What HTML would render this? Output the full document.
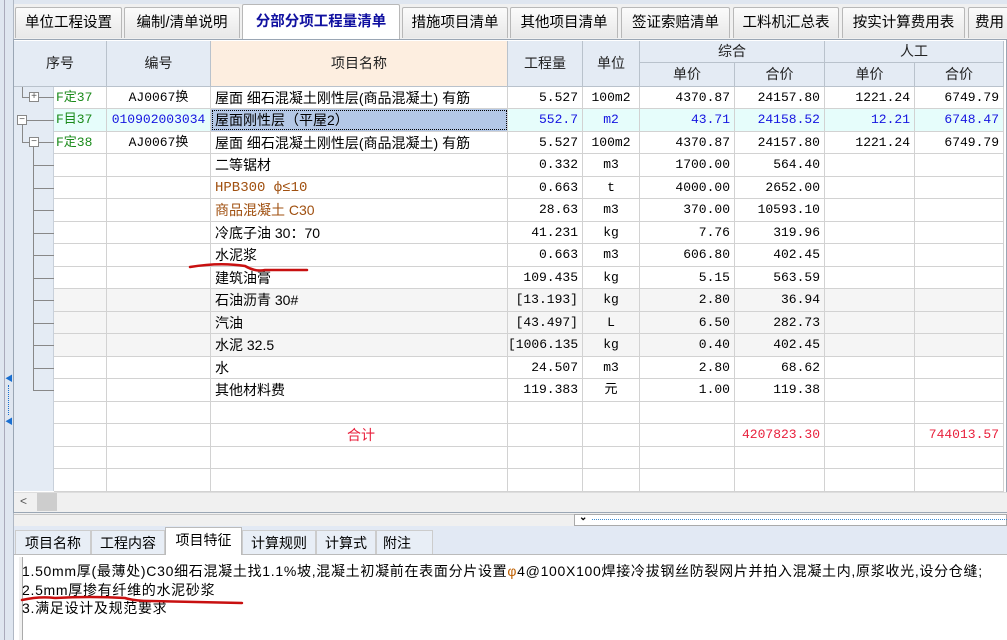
<!DOCTYPE html>
<html><head><meta charset="utf-8"><style>
*{margin:0;padding:0;box-sizing:border-box}
body{width:1007px;height:640px;overflow:hidden;background:#f0f0f0;font-family:"Liberation Sans","Noto Sans CJK SC","WenQuanYi Zen Hei",sans-serif;font-size:13px;color:#000;position:relative}
.abs{position:absolute}
.tab{position:absolute;top:7px;height:31px;border:1px solid #b8b8b8;border-bottom:none;background:linear-gradient(#fbfbfb,#e8e8e8);font-size:14.5px;line-height:30px;text-align:center;border-radius:2px 2px 0 0}
.tab.act{top:4px;height:35px;background:#fff;color:#1010a0;font-weight:bold;line-height:34px;z-index:2}
.hd{position:absolute;background:#e4ebf4;border-right:1px solid #b9c2cc;border-bottom:1px solid #b9c2cc;text-align:center;font-size:14px;color:#222}
.row{position:absolute;left:54px;width:950px;border-bottom:1px solid #d2d2d2;background:#fff}
.c{position:absolute;top:0;height:100%;line-height:22px;border-right:1px solid #d2d2d2;white-space:nowrap;overflow:hidden;font-family:"Liberation Mono","Noto Sans CJK SC",monospace;font-size:13px}
.s{left:0;width:53px;padding-left:2px;color:#1a8a1a}
.b{left:53px;width:104px;text-align:center}
.n{left:157px;width:297px;padding-left:4px;font-family:"Liberation Sans","Noto Sans CJK SC",sans-serif;font-size:14px}
.q{left:454px;width:75px;text-align:right;padding-right:4px}
.u{left:529px;width:57px;text-align:center}
.p1{left:586px;width:95px;text-align:right;padding-right:4px}
.p2{left:681px;width:90px;text-align:right;padding-right:4px}
.p3{left:771px;width:90px;text-align:right;padding-right:4px}
.p4{left:861px;width:89px;text-align:right;padding-right:4px}
.g{background:#f5f5f5}
.btab{position:absolute;top:530px;height:24px;border:1px solid #ccc;border-bottom:none;background:#e8eef6;font-size:14px;line-height:24px;text-align:center}
.tl{position:absolute;background:#888}
</style></head><body>
<div class="abs" style="left:0;top:0;width:14px;height:640px;background:#dfe6f0;border-right:1px solid #b0b8c4"></div>
<div class="abs" style="left:4px;top:0;width:1px;height:640px;background:#aab"></div>
<div class="abs" style="left:5px;top:373px;color:#1a6fd0;font-size:8px">◀</div>
<div class="abs" style="left:8px;top:385px;width:1px;height:30px;border-left:1px dotted #1a6fd0"></div>
<div class="abs" style="left:5px;top:416px;color:#1a6fd0;font-size:8px">◀</div>
<div class="abs" style="left:14px;top:0;width:993px;height:4px;background:#dfe6f0"></div>
<div class="tab" style="left:15px;width:107px">单位工程设置</div>
<div class="tab" style="left:124px;width:116px">编制/清单说明</div>
<div class="tab act" style="left:242px;width:158px">分部分项工程量清单</div>
<div class="tab" style="left:402px;width:106px">措施项目清单</div>
<div class="tab" style="left:510px;width:108px">其他项目清单</div>
<div class="tab" style="left:621px;width:109px">签证索赔清单</div>
<div class="tab" style="left:733px;width:106px">工料机汇总表</div>
<div class="tab" style="left:842px;width:123px">按实计算费用表</div>
<div class="tab" style="left:968px;width:45px;text-align:left;padding-left:6px">费用汇</div>
<div class="abs" style="left:13px;top:39px;width:994px;height:474px;background:#fff;border:1px solid #9aa6b4"></div>
<div class="hd" style="left:14px;top:41px;width:93px;height:46px;line-height:44px">序号</div>
<div class="hd" style="left:107px;top:41px;width:104px;height:46px;line-height:44px">编号</div>
<div class="hd" style="left:211px;top:41px;width:297px;height:46px;line-height:44px;background:#fdeee0">项目名称</div>
<div class="hd" style="left:508px;top:41px;width:75px;height:46px;line-height:44px">工程量</div>
<div class="hd" style="left:583px;top:41px;width:57px;height:46px;line-height:44px">单位</div>
<div class="hd" style="left:640px;top:41px;width:185px;height:22px;line-height:21px">综合</div>
<div class="hd" style="left:825px;top:41px;width:179px;height:22px;line-height:21px">人工</div>
<div class="hd" style="left:640px;top:63px;width:95px;height:24px;line-height:22px">单价</div>
<div class="hd" style="left:735px;top:63px;width:90px;height:24px;line-height:22px">合价</div>
<div class="hd" style="left:825px;top:63px;width:90px;height:24px;line-height:22px">单价</div>
<div class="hd" style="left:915px;top:63px;width:89px;height:24px;line-height:22px">合价</div>
<div class="abs" style="left:14px;top:87px;width:40px;height:404px;background:#e4ebf4;border-right:1px solid #c8d0da"></div>
<div class="tl" style="left:22px;top:87px;width:1px;height:10px"></div>
<div class="tl" style="left:22px;top:97px;width:8px;height:1px"></div>
<div class="abs" style="left:29px;top:92px;width:10px;height:10px;border:1px solid #888;background:#fff;font-size:10px;line-height:7px;text-align:center;color:#555">+</div>
<div class="tl" style="left:39px;top:97px;width:15px;height:1px"></div>
<div class="abs" style="left:17px;top:115px;width:10px;height:10px;border:1px solid #888;background:#fff;font-size:10px;line-height:7px;text-align:center;color:#555">−</div>
<div class="tl" style="left:27px;top:120px;width:27px;height:1px"></div>
<div class="tl" style="left:22px;top:125px;width:1px;height:18px"></div>
<div class="tl" style="left:22px;top:142px;width:7px;height:1px"></div>
<div class="abs" style="left:29px;top:137px;width:10px;height:10px;border:1px solid #888;background:#fff;font-size:10px;line-height:7px;text-align:center;color:#555">−</div>
<div class="tl" style="left:39px;top:142px;width:15px;height:1px"></div>
<div class="tl" style="left:33px;top:147px;width:1px;height:243px"></div>
<div class="tl" style="left:33px;top:165px;width:21px;height:1px"></div>
<div class="tl" style="left:33px;top:188px;width:21px;height:1px"></div>
<div class="tl" style="left:33px;top:210px;width:21px;height:1px"></div>
<div class="tl" style="left:33px;top:233px;width:21px;height:1px"></div>
<div class="tl" style="left:33px;top:255px;width:21px;height:1px"></div>
<div class="tl" style="left:33px;top:278px;width:21px;height:1px"></div>
<div class="tl" style="left:33px;top:300px;width:21px;height:1px"></div>
<div class="tl" style="left:33px;top:323px;width:21px;height:1px"></div>
<div class="tl" style="left:33px;top:345px;width:21px;height:1px"></div>
<div class="tl" style="left:33px;top:368px;width:21px;height:1px"></div>
<div class="tl" style="left:33px;top:390px;width:21px;height:1px"></div>

<div class="row" style="top:87px;height:22px"><div class="c s">F定37</div><div class="c b">AJ0067换</div><div class="c n">屋面 细石混凝土刚性层(商品混凝土) 有筋</div><div class="c q">5.527</div><div class="c u">100m2</div><div class="c p1">4370.87</div><div class="c p2">24157.80</div><div class="c p3">1221.24</div><div class="c p4">6749.79</div></div>
<div class="row" style="top:109px;height:23px;background:#e6fdfb"><div class="c s">F目37</div><div class="c b" style="color:#1515e0">010902003034</div><div class="c n" style="background:#b4c8e6;outline:1px dotted #000;outline-offset:-2px">屋面刚性层（平屋2）</div><div class="c q" style="color:#1515e0">552.7</div><div class="c u" style="color:#1515e0">m2</div><div class="c p1" style="color:#1515e0">43.71</div><div class="c p2" style="color:#1515e0">24158.52</div><div class="c p3" style="color:#1515e0">12.21</div><div class="c p4" style="color:#1515e0">6748.47</div></div>
<div class="row" style="top:132px;height:22px"><div class="c s">F定38</div><div class="c b">AJ0067换</div><div class="c n">屋面 细石混凝土刚性层(商品混凝土) 有筋</div><div class="c q">5.527</div><div class="c u">100m2</div><div class="c p1">4370.87</div><div class="c p2">24157.80</div><div class="c p3">1221.24</div><div class="c p4">6749.79</div></div>
<div class="row" style="top:154px;height:23px"><div class="c s"></div><div class="c b"></div><div class="c n">二等锯材</div><div class="c q">0.332</div><div class="c u">m3</div><div class="c p1">1700.00</div><div class="c p2">564.40</div><div class="c p3"></div><div class="c p4"></div></div>
<div class="row" style="top:177px;height:22px"><div class="c s"></div><div class="c b"></div><div class="c n" style="color:#a05010;font-family:'Liberation Mono','Noto Sans CJK SC',monospace">HPB300 ф≤10</div><div class="c q">0.663</div><div class="c u">t</div><div class="c p1">4000.00</div><div class="c p2">2652.00</div><div class="c p3"></div><div class="c p4"></div></div>
<div class="row" style="top:199px;height:23px"><div class="c s"></div><div class="c b"></div><div class="c n" style="color:#a05010">商品混凝土 C30</div><div class="c q">28.63</div><div class="c u">m3</div><div class="c p1">370.00</div><div class="c p2">10593.10</div><div class="c p3"></div><div class="c p4"></div></div>
<div class="row" style="top:222px;height:22px"><div class="c s"></div><div class="c b"></div><div class="c n">冷底子油 30：70</div><div class="c q">41.231</div><div class="c u">kg</div><div class="c p1">7.76</div><div class="c p2">319.96</div><div class="c p3"></div><div class="c p4"></div></div>
<div class="row" style="top:244px;height:23px"><div class="c s"></div><div class="c b"></div><div class="c n">水泥浆</div><div class="c q">0.663</div><div class="c u">m3</div><div class="c p1">606.80</div><div class="c p2">402.45</div><div class="c p3"></div><div class="c p4"></div></div>
<div class="row" style="top:267px;height:22px"><div class="c s"></div><div class="c b"></div><div class="c n">建筑油膏</div><div class="c q">109.435</div><div class="c u">kg</div><div class="c p1">5.15</div><div class="c p2">563.59</div><div class="c p3"></div><div class="c p4"></div></div>
<div class="row g" style="top:289px;height:23px"><div class="c s"></div><div class="c b"></div><div class="c n">石油沥青 30#</div><div class="c q">[13.193]</div><div class="c u">kg</div><div class="c p1">2.80</div><div class="c p2">36.94</div><div class="c p3"></div><div class="c p4"></div></div>
<div class="row g" style="top:312px;height:22px"><div class="c s"></div><div class="c b"></div><div class="c n">汽油</div><div class="c q">[43.497]</div><div class="c u">L</div><div class="c p1">6.50</div><div class="c p2">282.73</div><div class="c p3"></div><div class="c p4"></div></div>
<div class="row g" style="top:334px;height:23px"><div class="c s"></div><div class="c b"></div><div class="c n">水泥 32.5</div><div class="c q">[1006.135</div><div class="c u">kg</div><div class="c p1">0.40</div><div class="c p2">402.45</div><div class="c p3"></div><div class="c p4"></div></div>
<div class="row" style="top:357px;height:22px"><div class="c s"></div><div class="c b"></div><div class="c n">水</div><div class="c q">24.507</div><div class="c u">m3</div><div class="c p1">2.80</div><div class="c p2">68.62</div><div class="c p3"></div><div class="c p4"></div></div>
<div class="row" style="top:379px;height:23px"><div class="c s"></div><div class="c b"></div><div class="c n">其他材料费</div><div class="c q">119.383</div><div class="c u">元</div><div class="c p1">1.00</div><div class="c p2">119.38</div><div class="c p3"></div><div class="c p4"></div></div>
<div class="row" style="top:402px;height:22px"><div class="c s"></div><div class="c b"></div><div class="c n"></div><div class="c q"></div><div class="c u"></div><div class="c p1"></div><div class="c p2"></div><div class="c p3"></div><div class="c p4"></div></div>
<div class="row" style="top:424px;height:23px"><div class="c s"></div><div class="c b"></div><div class="c n" style="text-align:center;color:#e8203c">合计</div><div class="c q"></div><div class="c u"></div><div class="c p1"></div><div class="c p2" style="color:#e8203c">4207823.30</div><div class="c p3"></div><div class="c p4" style="color:#e8203c">744013.57</div></div>
<div class="row" style="top:447px;height:22px"><div class="c s"></div><div class="c b"></div><div class="c n"></div><div class="c q"></div><div class="c u"></div><div class="c p1"></div><div class="c p2"></div><div class="c p3"></div><div class="c p4"></div></div>
<div class="row" style="top:469px;height:23px"><div class="c s"></div><div class="c b"></div><div class="c n"></div><div class="c q"></div><div class="c u"></div><div class="c p1"></div><div class="c p2"></div><div class="c p3"></div><div class="c p4"></div></div>
<div class="abs" style="left:14px;top:492px;width:993px;height:20px;background:#f0f0f0;border-top:1px solid #ddd"></div>
<div class="abs" style="left:20px;top:494px;font-size:12px;color:#555">&lt;</div>
<div class="abs" style="left:37px;top:493px;width:20px;height:18px;background:#cdcdcd"></div>
<div class="abs" style="left:14px;top:514px;width:993px;height:12px;background:#f0f0f0;border-top:1px solid #c8c8c8"></div>
<div class="abs" style="left:574px;top:514px;width:433px;height:12px;border:1px solid #aaa;background:#fff"></div>
<div class="abs" style="left:579px;top:512px;font-size:10px;font-weight:bold">⌄</div>
<div class="abs" style="left:592px;top:519px;width:415px;height:1px;border-top:1px dotted #3a8ad0"></div>
<div class="abs" style="left:14px;top:526px;width:993px;height:29px;background:#e2e9f4"></div>
<div class="btab" style="left:15px;width:76px">项目名称</div>
<div class="btab" style="left:91px;width:74px">工程内容</div>
<div class="btab" style="left:165px;width:77px;top:527px;height:28px;background:#fff;border-color:#bbb;z-index:2">项目特征</div>
<div class="btab" style="left:242px;width:74px">计算规则</div>
<div class="btab" style="left:316px;width:60px">计算式</div>
<div class="btab" style="left:376px;width:57px;text-align:left;padding-left:6px">附注</div>
<div class="abs" style="left:14px;top:554px;width:993px;height:86px;background:#fff;border-top:1px solid #bbb"></div>
<div class="abs" style="left:19px;top:557px;width:4px;height:83px;background:#f0f0f0;border-right:1px solid #aaa"></div>
<div class="abs" style="left:22px;top:562px;font-size:14px;letter-spacing:0.7px;line-height:18.5px;white-space:nowrap">1.50mm厚(最薄处)C30细石混凝土找1.1%坡,混凝土初凝前在表面分片设置<span style="color:#c06000">φ</span>4@100X100焊接冷拔钢丝防裂网片并拍入混凝土内,原浆收光,设分仓缝;<br>2.5mm厚掺有纤维的水泥砂浆<br>3.满足设计及规范要求</div>
<svg class="abs" style="left:0;top:0" width="1007" height="640"><path d="M190 267 Q220 262 245 266 Q255 272 265 270 L307 270" stroke="#c81010" stroke-width="2.5" fill="none" stroke-linecap="round"/><path d="M22 600 Q40 596 55 598 Q90 596 125 598 Q135 601 150 601 L242 603" stroke="#c81010" stroke-width="2.5" fill="none" stroke-linecap="round"/></svg>
</body></html>
